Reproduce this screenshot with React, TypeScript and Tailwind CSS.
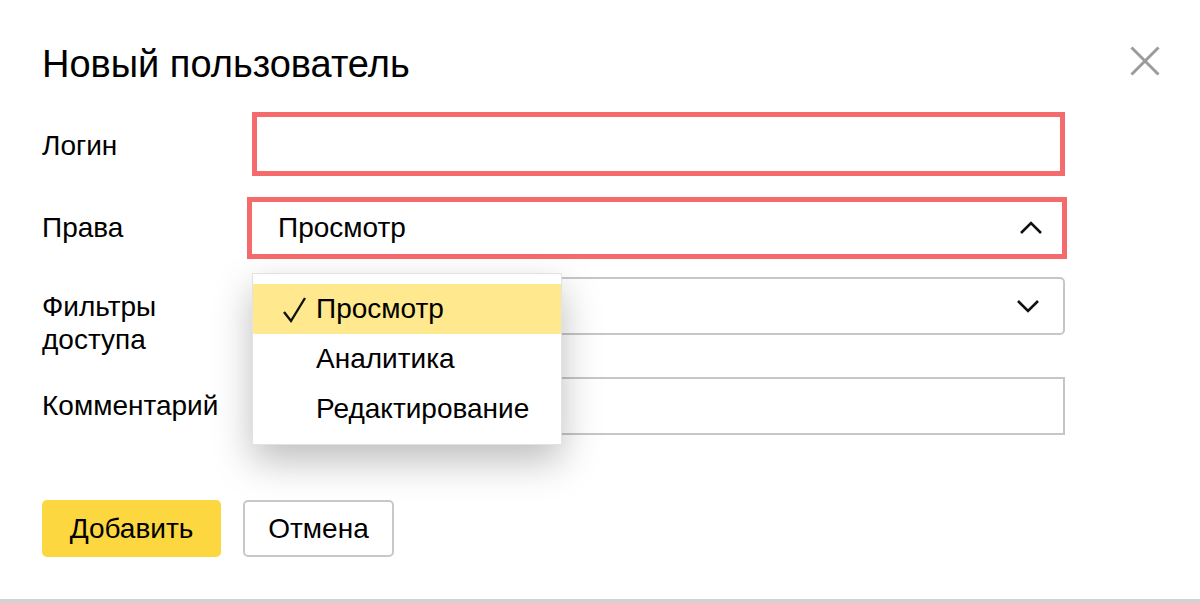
import React from "react";

const options = ["Просмотр", "Аналитика", "Редактирование"];

export default function App() {
  const selected = "Просмотр";

  return (
    <div className="relative w-[1200px] h-[603px] bg-white text-black font-['Liberation_Sans',Arial,sans-serif] overflow-hidden">
      <div className="flex flex-row items-start justify-between pl-[42px] pr-[38px] pt-[42px]">
        <div className="text-[38px] leading-[44px]">Новый пользователь</div>
        <button className="mt-[2px] w-[34px] h-[34px] flex items-center justify-center">
          <svg width="30" height="30" viewBox="0 0 30 30">
            <path d="M1.5 1.5 L28.5 28.5 M28.5 1.5 L1.5 28.5" stroke="#9b9b9b" strokeWidth="3" fill="none" />
          </svg>
        </button>
      </div>

      <div className="flex flex-col pl-[42px] mt-[26px] text-[28px]">
        <div className="flex flex-row items-center">
          <div className="w-[210px] pt-[4px]">Логин</div>
          <div className="w-[813px] h-[64px] border-[5px] border-[#f56b6b]"></div>
        </div>

        <div className="relative flex flex-row items-center mt-[21px]">
          <div className="w-[205px]">Права</div>
          <div className="w-[820px] h-[62px] border-[5px] border-[#f56b6b] flex flex-row items-center justify-between pl-[26px] pr-[18px]">
            <span>Просмотр</span>
            <svg width="26" height="16" viewBox="0 0 26 16">
              <path d="M3 13 L13 3 L23 13" stroke="#111" strokeWidth="2.6" fill="none" />
            </svg>
          </div>

          <div className="absolute left-[210px] top-[76px] z-10 w-[310px] bg-white border border-[#e2e2e2] py-[10px] shadow-[0_16px_36px_rgba(0,0,0,0.26)]">
            {options.map((opt, idx) => {
              return (
                <div
                  key={idx}
                  className={
                    opt === selected
                      ? "relative h-[50px] flex items-center pl-[63px] bg-[#ffe88d]"
                      : "relative h-[50px] flex items-center pl-[63px]"
                  }
                >
                  {opt === selected ? (
                    <svg
                      className="absolute left-[29px] top-[12px]"
                      width="26"
                      height="28"
                      viewBox="0 0 26 28"
                    >
                      <path d="M2 16 L9 25 L23 2" stroke="#111" strokeWidth="2.4" fill="none" />
                    </svg>
                  ) : null}
                  <span>{opt}</span>
                </div>
              );
            })}
          </div>
        </div>

        <div className="flex flex-row items-start mt-[18px]">
          <div className="w-[210px] leading-[33px] pt-[13px]">
            Фильтры
            <br />
            доступа
          </div>
          <div className="w-[813px] h-[58px] border-2 border-[#c6c6c6] rounded-[5px] flex flex-row items-center justify-end pr-[22px]">
            <svg width="26" height="16" viewBox="0 0 26 16">
              <path d="M3 3 L13 13 L23 3" stroke="#111" strokeWidth="2.6" fill="none" />
            </svg>
          </div>
        </div>

        <div className="flex flex-row items-center mt-[21px]">
          <div className="w-[210px]">Комментарий</div>
          <div className="w-[813px] h-[58px] border-2 border-[#c6c6c6]"></div>
        </div>

        <div className="flex flex-row gap-x-[22px] mt-[65px]">
          <button className="w-[179px] h-[57px] rounded-[5px] bg-[#fdd73f] text-[28px]">Добавить</button>
          <button className="w-[151px] h-[57px] rounded-[5px] border-2 border-[#c8c8c8] bg-white text-[28px]">
            Отмена
          </button>
        </div>
      </div>

      <div className="absolute left-0 right-0 bottom-0 h-[4px] bg-[#d2d2d2]"></div>
    </div>
  );
}
